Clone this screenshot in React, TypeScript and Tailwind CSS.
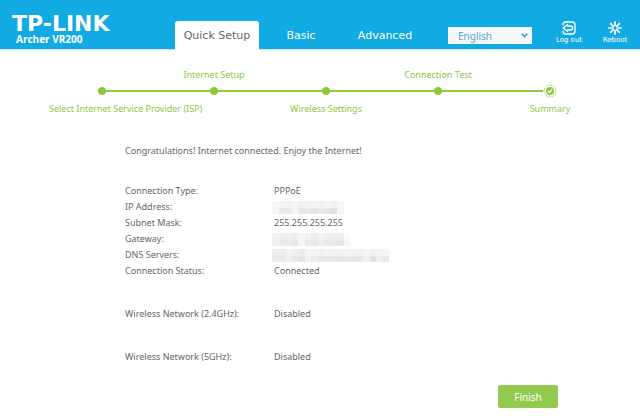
import { useState } from "react";

const TABS = ["Quick Setup", "Basic", "Advanced"];

const STEPS = [
    { label: "Select Internet Service Provider (ISP)", top: false },
    { label: "Internet Setup", top: true },
    { label: "Wireless Settings", top: false },
    { label: "Connection Test", top: true },
    { label: "Summary", top: false },
];

// Grey tones of the masked values, one per block: upper row, lower row
const IP_MASK = [
    ["#f8f8f8", "#f4f4f4", "#f2f2f2", "#f6f6f6", "#efefef", "#f1f1f1", "#f3f3f3", "#f1f1f1", "#f3f3f3", "#f0f0f0", "#f6f6f6"],
    ["#f5f5f5", "#e9e9e9", "#ebebeb", "#f4f4f4", "#e7e7e7", "#e9e9e9", "#e5e5e5", "#eaeaea", "#e7e7e7", "#e1e1e1", "#f5f5f5"],
];
const GATEWAY_MASK = [
    ["#f0f0f0", "#eeeeee", "#f0f0f0", "#eeeeee", "#f6f6f6", "#f0f0f0", "#ededed", "#f3f3f3", "#eeeeee", "#f0f0f0", "#eeeeee", "#f8f8f8"],
    ["#eeeeee", "#e9e9e9", "#ebebeb", "#e7e7e7", "#f5f5f5", "#eaeaea", "#e7e7e7", "#eeeeee", "#e8e8e8", "#eaeaea", "#e6e6e6", "#f6f6f6"],
];
const DNS_MASK = [
    ["#eeeeee", "#ececec", "#f1f1f1", "#eeeeee", "#ebebeb", "#f4f4f4", "#f3f3f3", "#f1f1f1", "#f3f3f3", "#f1f1f1", "#f0f0f0", "#f3f3f3", "#f1f1f1", "#f0f0f0", "#f4f4f4", "#eeeeee", "#f2f2f2", "#f5f5f5"],
    ["#ebebeb", "#e9e9e9", "#f0f0f0", "#e9e9e9", "#e5e5e5", "#f2f2f2", "#ececec", "#e7e7e7", "#e9e9e9", "#e7e7e7", "#e5e5e5", "#e9e9e9", "#e6e6e6", "#e8e8e8", "#f0f0f0", "#e3e3e3", "#eeeeee", "#e7e7e7"],
];

const CONNECTION = [
    { label: "Connection Type:", value: "PPPoE" },
    { label: "IP Address:", mask: IP_MASK },
    { label: "Subnet Mask:", value: "255.255.255.255" },
    { label: "Gateway:", mask: GATEWAY_MASK },
    { label: "DNS Servers:", mask: DNS_MASK },
    { label: "Connection Status:", value: "Connected" },
];
const WIRELESS_24 = [{ label: "Wireless Network (2.4GHz):", value: "Disabled" }];
const WIRELESS_5 = [{ label: "Wireless Network (5GHz):", value: "Disabled" }];

type Row = { label: string; value?: string; mask?: string[][] };

const Mask = ({ rows }: { rows: string[][] }) => {
    const width = rows[0].length * 13 / 2;
    return (
        <svg width={Math.round(width)} height="13" className="-ml-0.5" shapeRendering="crispEdges" aria-label="Hidden">
            {rows.map((row, y) =>
                row.map((fill, x) => (
                    <rect key={`${x}-${y}`} x={x * 6.5} y={y * 6.5} width="6.5" height="6.5" fill={fill} />
                ))
            )}
        </svg>
    );
};

const InfoList = ({ rows }: { rows: Row[] }) => (
    <dl>
        {rows.map((row) => (
            <div key={row.label} className="flex h-4 items-center">
                <dt className="w-[149px] shrink-0">{row.label}</dt>
                <dd>{row.mask ? <Mask rows={row.mask} /> : row.value}</dd>
            </div>
        ))}
    </dl>
);

const LogoutIcon = () => (
    <svg width="14" height="14" viewBox="0 0 14 14" fill="none" stroke="currentColor" strokeWidth="1.3">
        <path d="M1 4.6V3.6Q1 1 3.6 1H10Q13 1 13 4V10Q13 13 10 13H3.6Q1 13 1 10.4V9.4" />
        <path d="M1.3 7L5.4 3.4V5H8.2Q10.6 5 10.6 7T8.2 9H5.4V10.6Z" strokeLinejoin="round" />
    </svg>
);

const RebootIcon = () => (
    <svg width="14" height="14" viewBox="0 0 14 14" fill="none" stroke="currentColor" strokeWidth="1.7" strokeLinecap="round">
        <path d="M7 .9V4.6M7 9.4V13.1M.9 7H4.6M9.4 7H13.1M2.7 2.7L5.3 5.3M8.7 8.7L11.3 11.3M11.3 2.7L8.7 5.3M5.3 8.7L2.7 11.3" />
    </svg>
);

const CurrentMark = () => (
    <svg width="14" height="14" viewBox="0 0 14 14" fill="none" className="shrink-0">
        <circle cx="7" cy="7" r="5.9" stroke="#8dc63f" strokeWidth="1" strokeDasharray="1.2 .8" />
        <circle cx="7" cy="7" r="4" fill="#8dc63f" />
        <path d="M4.9 7L6.5 8.5L9.3 5.4" stroke="white" strokeWidth="1.2" />
    </svg>
);

const App = () => {
    const [tab, setTab] = useState("Quick Setup");
    const [language, setLanguage] = useState("English");

    return (
        <div className="min-h-screen bg-white font-['Noto_Sans',sans-serif] text-[9px] leading-4 text-[#666666]">
            {/* Header */}
            <header className="flex h-[50px] items-end border-b border-[#c5eaf8] bg-[#12aae2] text-white">
                <div className="w-[175px] shrink-0 pb-1 pl-3 font-bold">
                    <div className="font-['DejaVu_Sans',sans-serif] text-[22px] leading-[18px]">TP-LINK</div>
                    <div className="pl-1 font-['Open_Sans',sans-serif] text-[10px] leading-3">Archer VR200</div>
                </div>

                <nav className="flex">
                    {TABS.map((name) => (
                        <button
                            key={name}
                            onClick={() => setTab(name)}
                            className={`-mb-px h-[29px] w-[84px] rounded-t-[3px] font-['DejaVu_Sans',sans-serif] text-[11px] whitespace-nowrap ${tab === name
                                ? "bg-white text-[#666666]"
                                : "text-white"
                                }`}
                        >
                            {name}
                        </button>
                    ))}
                </nav>

                <div className="ml-auto flex items-end pr-0.5">
                    <div className="mr-3.5 mb-[5px] grid items-center">
                        <select
                            aria-label="Language"
                            value={language}
                            onChange={(e) => setLanguage(e.target.value)}
                            className="col-start-1 row-start-1 h-[17px] w-[84px] appearance-none bg-[#f4f8fa] pl-[10px] text-[10px] text-[#5aa5cc]"
                        >
                            <option>English</option>
                        </select>
                        <svg width="7" height="5" viewBox="0 0 7 5" fill="none" stroke="#2f9bc9" strokeWidth="1.5" className="pointer-events-none col-start-1 row-start-1 mr-1 justify-self-end">
                            <path d="M.7 .8L3.5 3.6L6.3 .8" />
                        </svg>
                    </div>
                    <button className="flex w-[46px] flex-col items-center pb-1 font-['DejaVu_Sans',sans-serif] text-[7px] leading-[10px] whitespace-nowrap">
                        <LogoutIcon />
                        Log out
                    </button>
                    <button className="flex w-[46px] flex-col items-center pb-1 font-['DejaVu_Sans',sans-serif] text-[7px] leading-[10px] whitespace-nowrap">
                        <RebootIcon />
                        Reboot
                    </button>
                </div>
            </header>

            {/* Steps */}
            <ol className="grid grid-cols-5 pt-[17px] pr-[34px] pl-[46px] text-[#8dc63f]">
                {STEPS.map((step, i) => (
                    <li key={step.label} className="flex min-w-0 flex-col">
                        <div className="flex h-[17px] justify-center whitespace-nowrap">{step.top && step.label}</div>
                        <div className="flex h-[14px] items-center">
                            <span className={`h-0.5 flex-1 ${i > 0 ? "bg-[#8dc63f]" : ""}`} />
                            {i === STEPS.length - 1 ? (
                                <CurrentMark />
                            ) : (
                                <span className="size-2 shrink-0 rounded-full bg-[#8dc63f]" />
                            )}
                            <span className={`h-0.5 flex-1 ${i < STEPS.length - 1 ? "bg-[#8dc63f]" : ""}`} />
                        </div>
                        <div className={`mt-[3px] flex h-4 whitespace-nowrap ${i === 0 ? "justify-start pl-[3px]" : "justify-center"}`}>
                            {!step.top && step.label}
                        </div>
                    </li>
                ))}
            </ol>

            {/* Summary */}
            <main className="pt-[26px] pr-[82px] pb-[11px] pl-[125px]">
                <p className="mb-6">Congratulations! Internet connected. Enjoy the Internet!</p>
                <div className="flex flex-col gap-[27px]">
                    <InfoList rows={CONNECTION} />
                    <InfoList rows={WIRELESS_24} />
                    <InfoList rows={WIRELESS_5} />
                </div>
                <div className="mt-5 flex justify-end">
                    <button className="h-[23px] w-[60px] rounded-xs bg-[#92ca4e] text-[10px] text-white">
                        Finish
                    </button>
                </div>
            </main>
        </div>
    );
};

export default App;
